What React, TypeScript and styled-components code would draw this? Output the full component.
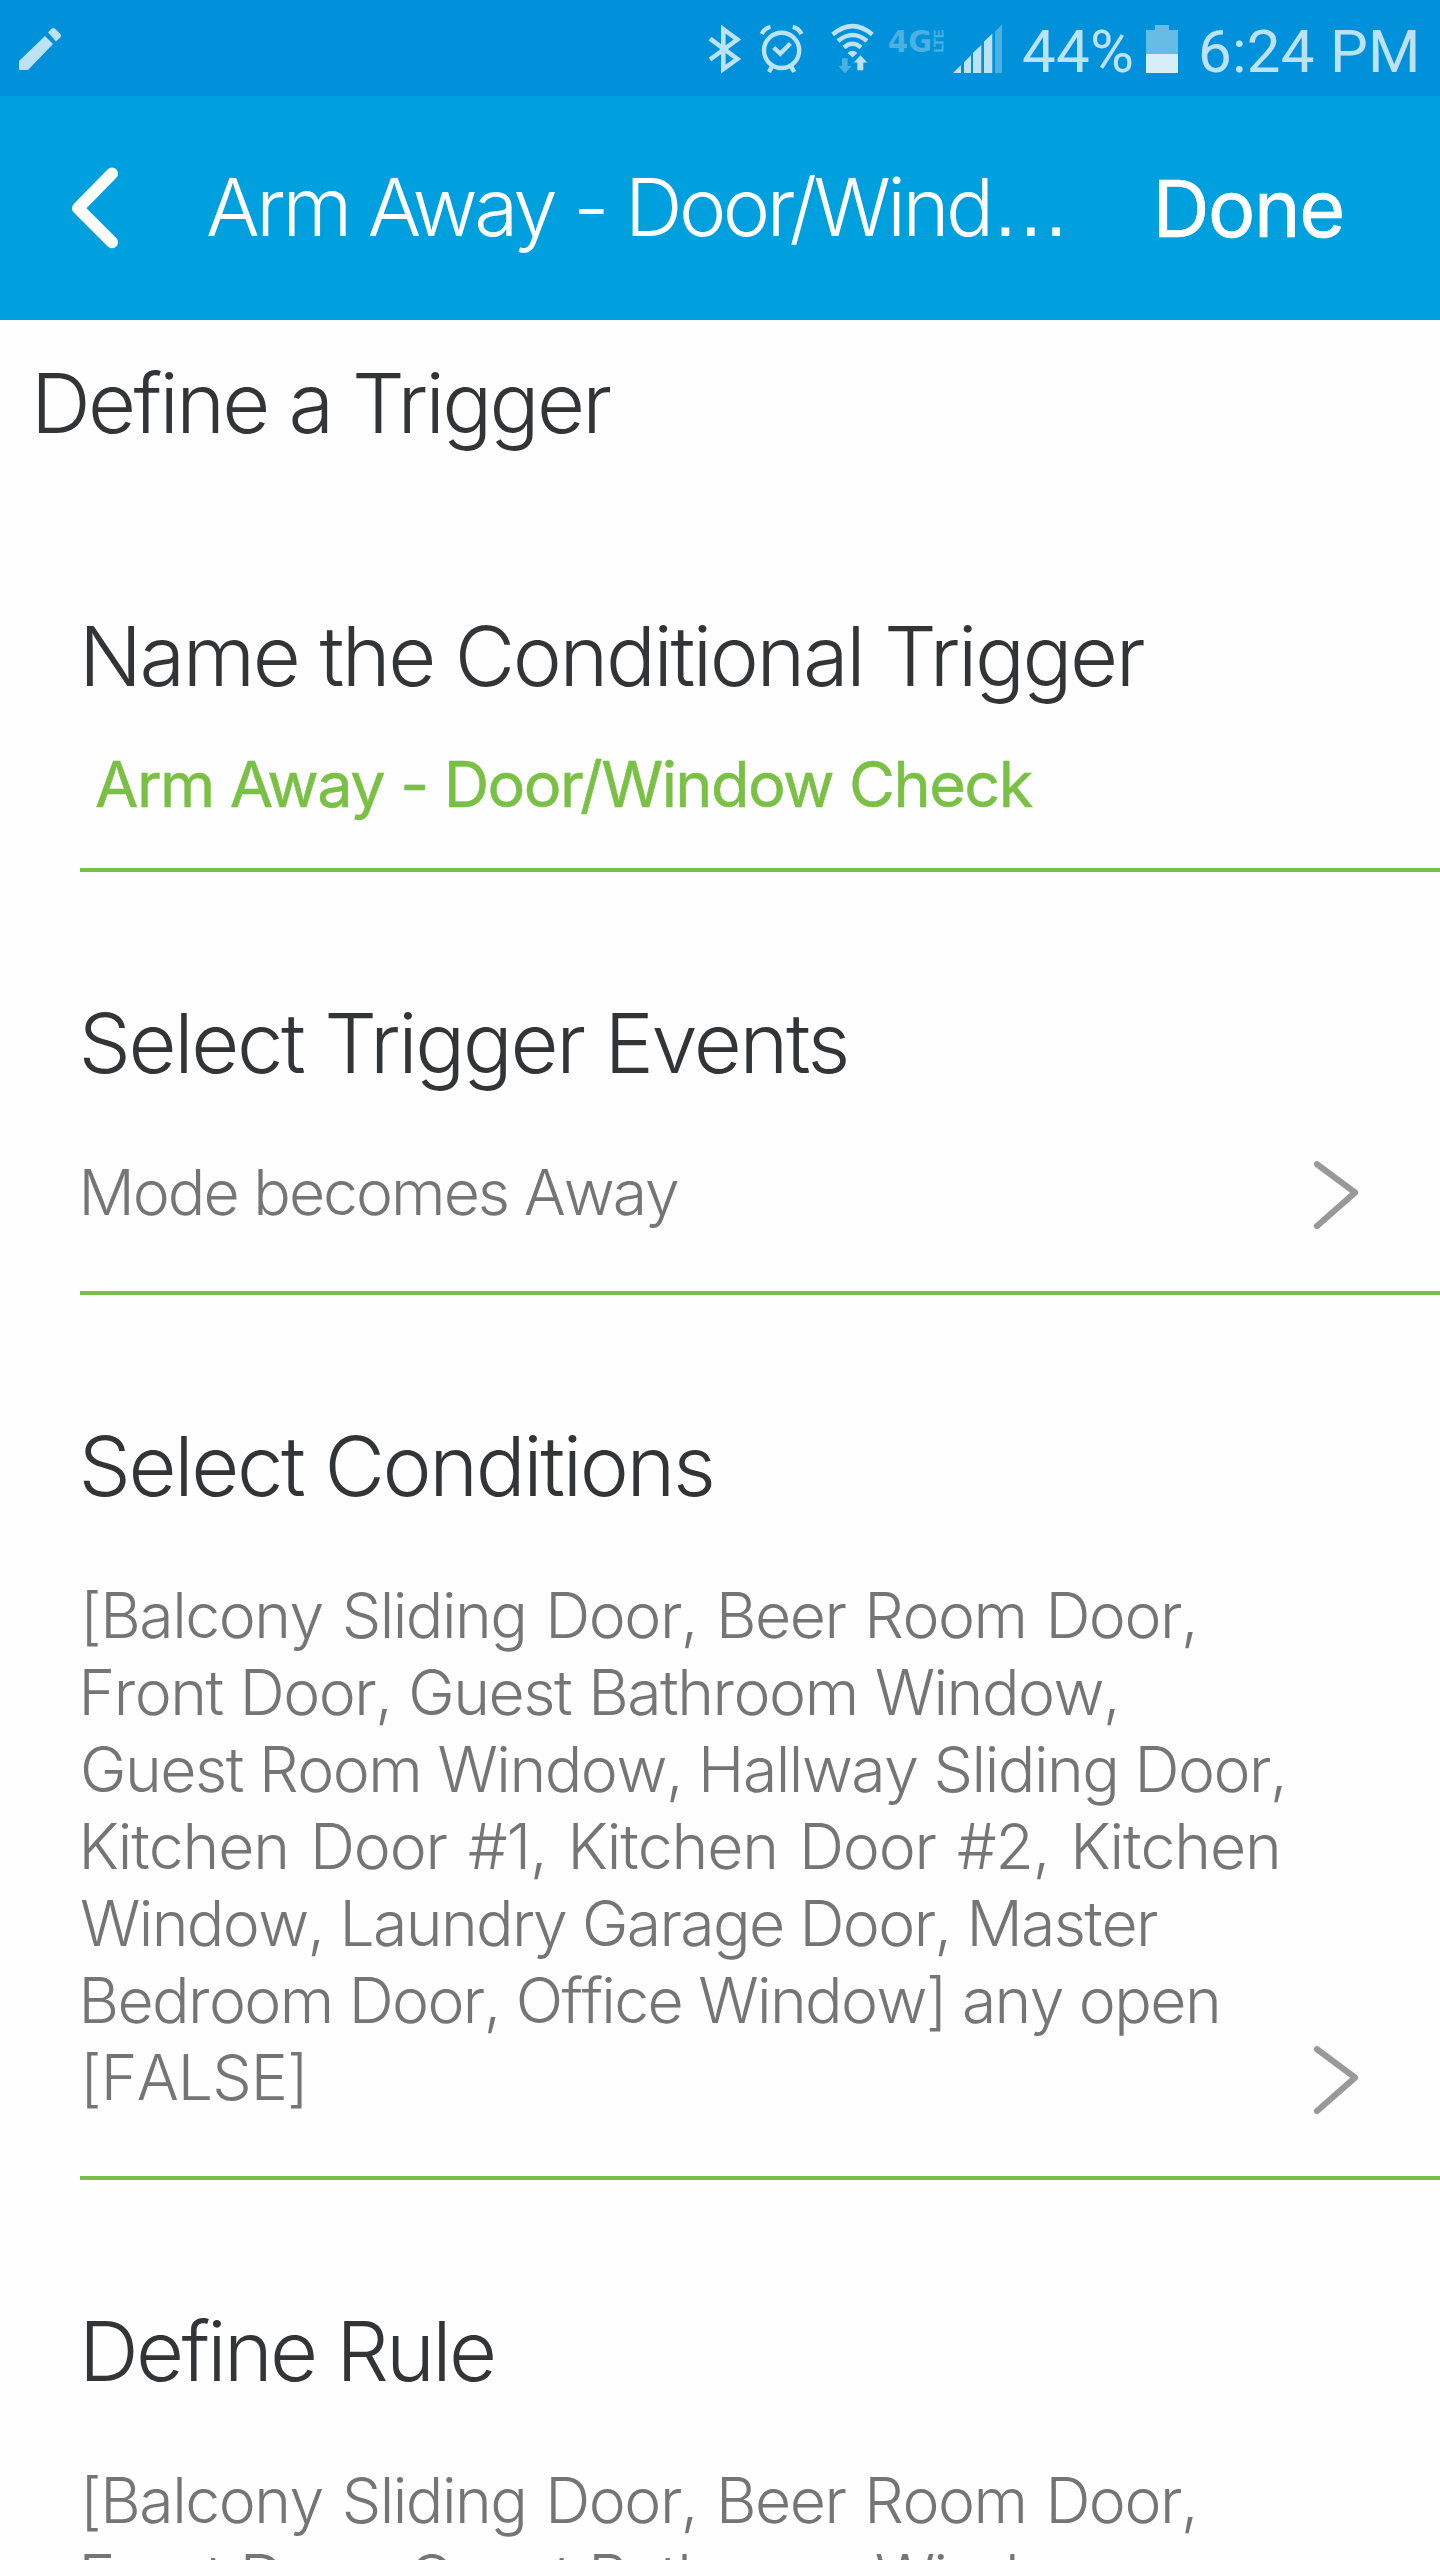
import React from 'react';
import styled, { createGlobalStyle } from 'styled-components';

const INK = '#bde2f5';
const DIM = '#4bb0e2';

const GlobalStyle = createGlobalStyle`
  body {
    margin: 0;
    background: #fefefe;
  }
`;

const Screen = styled.div`
  width: 1440px;
  height: 2560px;
  overflow: hidden;
  background: #fefefe;
  color: #333436;
  font-family: Inter, "Liberation Sans", sans-serif;
  font-weight: 300;
`;

const StatusBar = styled.div`
  display: flex;
  justify-content: space-between;
  height: 96px;
  padding-right: 20px;
  background: #0091da;
`;

const StatusGroup = styled.div`
  display: flex;
  height: 96px;
`;

const Glyph = styled.svg`
  display: block;
  flex: none;
`;

const StatusText = styled.span<{ $width: number }>`
  width: ${p => p.$width}px;
  color: ${INK};
  font-family: Roboto, sans-serif;
  font-size: 60px;
  font-weight: 400;
  line-height: 103px;
  letter-spacing: 0.27px;
  white-space: nowrap;
`;

const Header = styled.header`
  display: flex;
  align-items: center;
  height: 224px;
  padding-right: 96px;
  background: #00a0df;
  color: #fff;
`;

const BackButton = styled.button`
  width: 206px;
  height: 224px;
  padding: 0;
  border: 0;
  background: none;
`;

const Title = styled.h1`
  display: flex;
  flex: 1;
  align-items: baseline;
  margin: 0;
  font-size: 80px;
  font-weight: 300;
  line-height: 100px;
  letter-spacing: -3.53px;
  white-space: nowrap;
`;

const Ellipsis = styled.span`
  font-family: "Liberation Sans", sans-serif;
  letter-spacing: 0;
`;

const DoneButton = styled.button`
  padding: 0;
  border: 0;
  background: none;
  color: #fff;
  font-family: inherit;
  font-size: 79px;
  font-weight: 400;
  line-height: 100px;
  letter-spacing: -1.4px;
  -webkit-text-stroke: 0.7px #fff;
`;

const TextLine = styled.span<{ $spacing: number; $indent?: number; $words?: number }>`
  display: block;
  letter-spacing: ${p => p.$spacing}px;
  word-spacing: ${p => p.$words ?? 0}px;
  text-indent: ${p => p.$indent ?? 0}px;
  white-space: nowrap;
`;

const PageHeading = styled.h2`
  margin: 33px 0 0 31px;
  font-size: 83px;
  font-weight: 300;
  line-height: 100px;
`;

const Section = styled.section<{ $top: number; $bottom: number }>`
  margin-left: 80px;
  padding: ${p => p.$top}px 0 ${p => p.$bottom}px;
  border-bottom: 4px solid #79c045;
`;

const SectionHeading = styled.h3`
  margin: 0;
  font-size: 83px;
  font-weight: 300;
  line-height: 100px;
`;

const NameField = styled.div`
  margin: 40px 0 0 15px;
  color: #79c045;
  font-size: 63px;
  font-weight: 400;
  line-height: 77px;
  -webkit-text-stroke: 0.5px #79c045;
`;

const Row = styled.div`
  display: flex;
  align-items: flex-end;
  justify-content: space-between;
  margin-top: 61px;
  padding-right: 80px;
`;

const Value = styled.div`
  color: #757575;
  font-size: 62.5px;
  font-kerning: none;
  line-height: 77px;
`;

type Line = { text: string; spacing: number; indent: number; words?: number };

const doors: Line[] = [
  { text: '[Balcony Sliding Door, Beer Room Door,', spacing: -1.5, indent: 0, words: 2.8 },
  { text: 'Front Door, Guest Bathroom Window,', spacing: -1.5, indent: -1.5, words: 0.9 },
  { text: 'Guest Room Window, Hallway Sliding Door,', spacing: -1.49, indent: 0 },
  { text: 'Kitchen Door #1, Kitchen Door #2, Kitchen', spacing: -1.15, indent: -1.5, words: 4.7 },
  { text: 'Window, Laundry Garage Door, Master', spacing: -1.64, indent: 0 },
  { text: 'Bedroom Door, Office Window] any open', spacing: -1.62, indent: -1.5 },
  { text: '[FALSE]', spacing: -0.93, indent: 0 },
];

const modeLine: Line[] = [{ text: 'Mode becomes Away', spacing: -2, indent: -1.5 }];

const Chevron = () => (
  <Glyph width="50" height="77" viewBox="0 0 50 77" fill="none">
    <path d="M7 10.2L45 38.6L7 72" stroke="#999" strokeWidth="6.2" strokeLinecap="round" strokeLinejoin="round" />
  </Glyph>
);

const Pencil = () => (
  <Glyph width="80" height="96" viewBox="0 0 80 96" fill={INK}>
    <path d="M19 70V61L45 36L53 44L28 70Z" />
    <path d="M48 32.2L51.8 28.6Q53.3 27.4 54.8 28.6L60.4 34Q61.8 35.6 60.4 37.2L56 41.5Z" />
  </Glyph>
);

const Bluetooth = () => (
  <Glyph width="52" height="96" viewBox="700 0 52 96" fill="none" stroke={INK} strokeWidth="4.6">
    <path d="M710 38.7L737.3 59L723.3 69V29.2L737.3 39.5L710 59.5" />
  </Glyph>
);

const Alarm = () => (
  <Glyph width="60" height="96" viewBox="752 0 60 96" fill="none" stroke={INK} strokeWidth="4.4">
    <circle cx="781.6" cy="50.4" r="17.6" />
    <path d="M773.6 47.5L780.2 53.7L790.4 43.5" />
    <path d="M761.7 34Q764.5 28 770.5 26.8M801.5 34Q798.7 28 792.7 26.8" />
    <path d="M772.5 65.5L769 72M790.7 65.5L794.2 72" />
  </Glyph>
);

const Wifi = () => (
  <Glyph width="70" height="96" viewBox="812 0 70 96">
    <g fill="none" stroke={INK} strokeWidth="4.4">
      <path d="M832.7 34.5Q852.5 17.8 872.3 34.5" />
      <path d="M838 41Q852.5 29 867 41" />
      <path d="M844 47.5Q852.5 40 861 47.5" />
    </g>
    <path d="M847.6 53Q852.5 48.4 857.4 53L852.5 57.4Z" fill={INK} />
    <path d="M842 58.3H847.7V66H851.7L845 73.3L838.3 66H842Z" fill={DIM} />
    <path d="M860.4 55.3L867.2 62.5H863.3V70.3H857.3V62.5H853.8Z" fill={INK} />
  </Glyph>
);

const Network = () => (
  <Glyph width="64" height="96" viewBox="882 0 64 96" fill={DIM} fontFamily='"DejaVu Sans", sans-serif' fontWeight="700">
    <text x="888" y="52" fontSize="30" textLength="44" lengthAdjust="spacingAndGlyphs">4G</text>
    <text transform="translate(942.5 52.5) rotate(-90)" fontSize="12.5" fontWeight="400" stroke={DIM} strokeWidth="0.6" textLength="23" lengthAdjust="spacingAndGlyphs">LTE</text>
  </Glyph>
);

const Signal = () => (
  <Glyph width="76" height="96" viewBox="946 0 76 96" fill={INK}>
    <path d="M953 73L961 65V73Z" />
    <path d="M964 73V62.3L971 55.3V73Z" />
    <path d="M973 73V52.7L981.3 45V73Z" />
    <path d="M984 73V41.5L992.3 33.7V73Z" />
    <path d="M995 73V31.5L1002 24.5V73Z" fill={DIM} />
  </Glyph>
);

const Battery = () => (
  <Glyph width="64" height="96" viewBox="1134 0 64 96">
    <path d="M1146 54V30H1155V25H1169V30H1178V54Z" fill="#66bce4" />
    <path d="M1146 54H1178V73H1146Z" fill="#d7edf8" />
  </Glyph>
);

const Lines = ({ lines }: { lines: Line[] }) => (
  <Value>
    {lines.map(line => (
      <TextLine key={line.text} $spacing={line.spacing} $indent={line.indent} $words={line.words}>{line.text}</TextLine>
    ))}
  </Value>
);

export default function App() {
  return (
    <Screen>
      <GlobalStyle />
      <StatusBar>
        <Pencil />
        <StatusGroup>
          <Bluetooth />
          <Alarm />
          <Wifi />
          <Network />
          <Signal />
          <StatusText $width={112}>44%</StatusText>
          <Battery />
          <StatusText $width={222}>6:24 PM</StatusText>
        </StatusGroup>
      </StatusBar>
      <Header>
        <BackButton aria-label="Back">
          <Glyph width="206" height="224" viewBox="0 96 206 224" fill="none">
            <path d="M112 173.5L78 208.2L112 242.3" stroke="#fff" strokeWidth="12" strokeLinecap="round" strokeLinejoin="round" />
          </Glyph>
        </BackButton>
        <Title>Arm Away - Door/Wind<Ellipsis>…</Ellipsis></Title>
        <DoneButton>Done</DoneButton>
      </Header>

      <PageHeading><TextLine $spacing={-2.66}>Define a Trigger</TextLine></PageHeading>

      <Section $top={153} $bottom={45}>
        <SectionHeading><TextLine $spacing={-2.42} $indent={-1}>Name the Conditional Trigger</TextLine></SectionHeading>
        <NameField><TextLine $spacing={-1.58}>Arm Away - Door/Window Check</TextLine></NameField>
      </Section>

      <Section $top={121} $bottom={60}>
        <SectionHeading><TextLine $spacing={-2.39} $indent={-1.5}>Select Trigger Events</TextLine></SectionHeading>
        <Row><Lines lines={modeLine} /><Chevron /></Row>
      </Section>

      <Section $top={121} $bottom={60}>
        <SectionHeading><TextLine $spacing={-2.38} $indent={-1.5}>Select Conditions</TextLine></SectionHeading>
        <Row><Lines lines={doors} /><Chevron /></Row>
      </Section>

      <Section $top={121} $bottom={60}>
        <SectionHeading><TextLine $spacing={-2.7} $indent={-1}>Define Rule</TextLine></SectionHeading>
        <Row><Lines lines={doors.slice(0, 2)} /></Row>
      </Section>
    </Screen>
  );
}
